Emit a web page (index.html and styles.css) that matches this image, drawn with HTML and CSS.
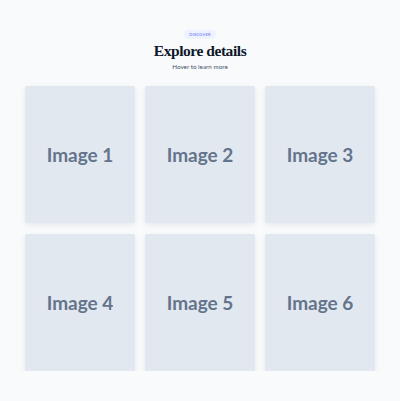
FILE: index.html
```html
<!DOCTYPE html>
<html lang="en">
<head>
    <meta charset="UTF-8">
    <meta name="viewport" content="width=device-width, initial-scale=1.0">
    <title>Explore details</title>
    <link rel="stylesheet" href="styles.css">
</head>
<body>
    <section class="gallery">
        <header class="gallery-header">
            <span class="badge">Discover</span>
            <h1>Explore details</h1>
            <p class="subtitle">Hover to learn more</p>
        </header>

        <div class="grid">
            <div class="card">Image 1</div>
            <div class="card">Image 2</div>
            <div class="card">Image 3</div>
            <div class="card">Image 4</div>
            <div class="card">Image 5</div>
            <div class="card">Image 6</div>
        </div>
    </section>
</body>
</html>
```

FILE: styles.css
```css
body {
    font-family: Lato, "Noto Sans", sans-serif;
    margin: 0;
    padding: 0;
    background-color: #f8fafc;
}

.gallery {
    padding: 30px 25px 0;
}

.gallery-header {
    display: flex;
    flex-direction: column;
    align-items: center;
}

.badge {
    font-size: 4px;
    font-weight: 700;
    text-transform: uppercase;
    letter-spacing: 0.2px;
    color: #818cf8;
    background: #eef2ff;
    padding: 2px 5px;
    border-radius: 6px;
}

h1 {
    font-family: "Liberation Serif", "DejaVu Serif", serif;
    font-size: 15.5px;
    font-weight: 700;
    letter-spacing: -0.45px;
    color: #0f172a;
    margin: 3px 0 0;
}

.subtitle {
    font-size: 6.3px;
    color: #475569;
    margin: 3px 0 0;
}

.grid {
    display: grid;
    grid-template-columns: repeat(3, 110px);
    grid-auto-rows: 137px;
    gap: 11px 10px;
    margin-top: 16px;
}

.card {
    display: flex;
    align-items: center;
    justify-content: center;
    background: #e2e8f0;
    color: #64748b;
    font-size: 19px;
    font-weight: 700;
    border-radius: 2px;
    box-shadow: 0 2px 6px rgba(15, 23, 42, 0.08);
}
```
